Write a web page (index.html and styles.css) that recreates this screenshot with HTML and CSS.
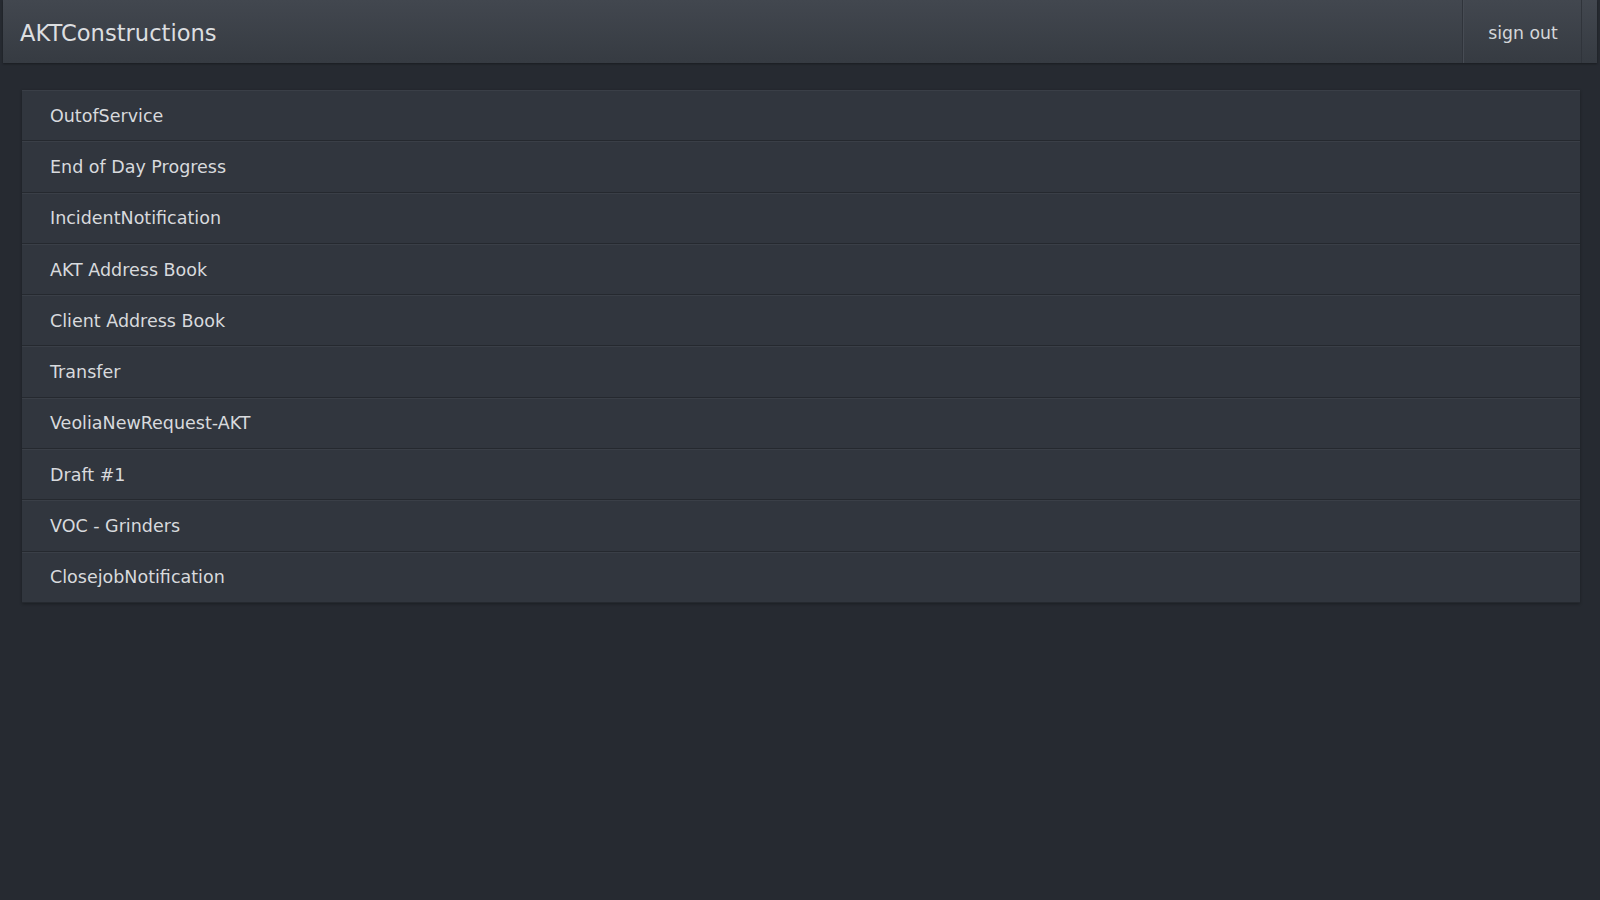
FILE: index.html
```html
<!DOCTYPE html>
<html>
<head>
<meta charset="utf-8">
<title>AKTConstructions</title>
<link rel="stylesheet" href="styles.css">
</head>
<body>
<header class="topbar">
  <div class="brand">AKTConstructions</div>
  <a class="signout" href="#">sign out</a>
</header>
<main class="content">
  <ul class="list">
    <li class="item">OutofService</li>
    <li class="item">End of Day Progress</li>
    <li class="item">IncidentNotification</li>
    <li class="item">AKT Address Book</li>
    <li class="item">Client Address Book</li>
    <li class="item">Transfer</li>
    <li class="item">VeoliaNewRequest-AKT</li>
    <li class="item">Draft #1</li>
    <li class="item">VOC - Grinders</li>
    <li class="item">ClosejobNotification</li>
  </ul>
</main>
</body>
</html>
```
FILE: styles.css
```css
html, body {
  margin: 0;
  padding: 0;
  height: 100%;
}
body {
  background: #262a31;
  font-family: "DejaVu Sans", Verdana, sans-serif;
  color: #d6d8db;
}
.topbar {
  margin: 0 3px;
  height: 63px;
  display: flex;
  align-items: center;
  background: linear-gradient(#42474f, #363b42);
  box-shadow: 0 1px 2px rgba(0,0,0,0.35);
}
.brand {
  flex: 1;
  padding-left: 17px;
  padding-top: 2px;
  font-size: 22.6px;
  color: #dcdee0;
}
.signout {
  align-self: stretch;
  display: flex;
  align-items: center;
  justify-content: center;
  width: 120px;
  margin-right: 15px;
  padding-top: 2px;
  padding-left: 2px;
  box-sizing: border-box;
  border-left: 1px solid #30343b;
  border-right: 1px solid #30343b;
  box-shadow: inset 1px 0 0 #474c54;
  color: #d4d6d9;
  font-size: 17.3px;
  text-decoration: none;
}
.content {
  padding: 27px 20px 0 22px;
}
.list {
  list-style: none;
  margin: 0;
  padding: 0;
  box-shadow: 0 1px 3px rgba(0,0,0,0.3);
}
.item {
  display: flex;
  align-items: center;
  padding-left: 28px;
  background: #31363e;
  border-top: 1px solid #3a3f47;
  border-bottom: 1px solid #25292f;
  box-sizing: border-box;
  height: 51.3px;
  font-size: 17.5px;
  color: #d8dadd;
}
```
